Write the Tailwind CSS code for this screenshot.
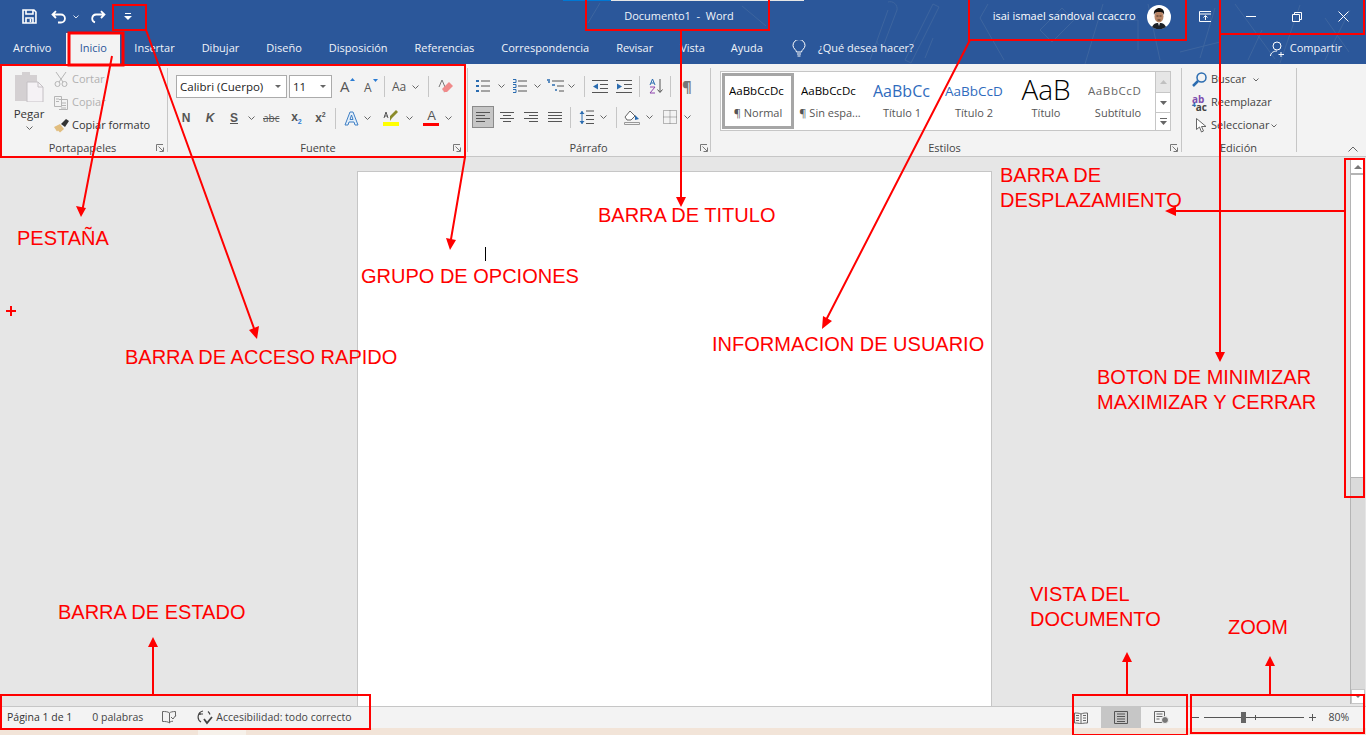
<!doctype html>
<html lang="es">
  <head>
    <meta charset="UTF-8">
    <title>Documento1 - Word</title>
    <script src="https://cdn.jsdelivr.net/npm/@tailwindcss/browser@4"></script>
  </head>
  <body class="overflow-hidden">
    <div class="relative w-[1366px] h-[735px] overflow-hidden flex flex-col font-['Open_Sans',sans-serif] text-[11px] text-[#444]">

      <!-- title bar + tabs -->
      <div class="relative h-[64px] shrink-0 bg-[#2b579a] text-white">
        <svg class="absolute inset-0" width="1366" height="64" fill="none" stroke="#3d659f" stroke-width="1">
          <path d="M905 60l28-56 6 3-28 56zM1004 60l-24-42 8-14M1040 30l22-22 12 12-22 22zM1085 64l18-60M1108 20h30v30M1160 60l-12-56M1215 8l-15 50M1235 4l40 55M1180 52l40-10M1262 30l-14 30M1300 5l-20 58M1350 10l-25 50M1325 18l24 34"/>
          <path d="M870 60l18-50M888 2a7 7 0 0 1 9 8l-13 34a4 4 0 0 1-7-3M925 58l8-20M600 3l-12 20M742 6l24 20"/>
        </svg>
        <div class="absolute top-0 left-[563px] w-[241px] h-[1px] bg-[#e6e6e6]"><div class="w-[48px] h-[1px] bg-[#0078d4]"></div></div>

        <div class="relative h-[33px] flex items-center pl-[22px]">
          <svg width="15" height="15" viewBox="0 0 15 15" fill="none" stroke="#fff" stroke-width="1.6"><path d="M1 1h11l2 2v11H1zM4 1v4h7V1M4 14V9h7v5"/><path d="M8.500 10v3" /></svg>
          <svg class="ml-[14px]" width="16" height="14" viewBox="0 0 16 14" fill="none" stroke="#fff" stroke-width="1.800"><path d="M5 1L1.500 4.500 5 8M2 4.500h8a4 4 0 0 1 0 8H7"/></svg>
          <svg class="ml-[6px]" width="6" height="4" viewBox="0 0 6 4" fill="none" stroke="#dfe7f3"><path d="M.5.5L3 3 5.500.5"/></svg>
          <svg class="ml-[12px]" width="15" height="14" viewBox="0 0 15 14" fill="none" stroke="#fff" stroke-width="1.800"><path d="M10 1l3.500 3.500L10 8M13 4.500H5a4 4 0 0 0-1 7.800"/></svg>
          <svg class="ml-[18px]" width="8" height="7" viewBox="0 0 8 7" fill="#fff"><path d="M1 0h6v1H1zM0 3h8L4 7z"/></svg>
          <div class="ml-[456px] w-[183px] text-center text-[11px] text-[#f1f4f9]">Documento1&nbsp; -&nbsp; Word</div>
          <div class="ml-[200px] w-[217px] flex items-center justify-end pr-[16px]">
            <span class="text-[11px] whitespace-nowrap mr-[11px]">isai ismael sandoval ccaccro</span>
            <svg width="24" height="24" viewBox="0 0 24 24">
              <circle cx="12" cy="12" r="12" fill="#fff"/>
              <path d="M5 22c2-4 4-4 7-4s5 0 7 4a12 12 0 0 1-14 0z" fill="#1c2026"/>
              <path d="M11 18l1 3 1-3z" fill="#eee"/>
              <ellipse cx="12" cy="11.500" rx="4.500" ry="6" fill="#b98565"/>
              <path d="M7 10c-1-5 3-7 5-7s6 1 5 7c-1-3-2-3-5-3s-4 0-5 3z" fill="#15110f"/>
              <path d="M9.500 11h2M12.500 11h2M10.500 15h3" stroke="#2b1c14" stroke-width=".8"/>
            </svg>
          </div>
          <svg class="ml-[12px]" width="13" height="11" viewBox="0 0 13 11" fill="none" stroke="#fff"><path d="M.5.500h12v10H.5zM.5 3h12M6.500 9V5M4.500 6.500l2-2 2 2"/></svg>
          <div class="ml-[17px] w-[46px] flex justify-center"><div class="w-[10px] h-[1px] bg-white"></div></div>
          <div class="w-[46px] flex justify-center"><svg width="10" height="10" viewBox="0 0 10 10" fill="none" stroke="#fff"><path d="M.5 2.500h7v7h-7zM2.500 2.500v-2h7v7h-2"/></svg></div>
          <div class="w-[46px] flex justify-center"><svg width="11" height="11" viewBox="0 0 11 11" fill="none" stroke="#fff"><path d="M.5.500l10 10M10.500.500l-10 10"/></svg></div>
        </div>

        <div class="relative h-[31px] flex items-center text-[11px] text-[#f1f4f9]">
          <div class="ml-[13px] -mt-[1px]">Archivo</div>
          <div class="ml-[15px] w-[54px] h-[31px] bg-[#f3f3f3] text-[#2b579a] flex items-center justify-center">Inicio</div>
          <div class="ml-[14px]">Insertar</div>
          <div class="ml-[27px]">Dibujar</div>
          <div class="ml-[27px]">Diseño</div>
          <div class="ml-[27px]">Disposición</div>
          <div class="ml-[27px]">Referencias</div>
          <div class="ml-[27px]">Correspondencia</div>
          <div class="ml-[27px]">Revisar</div>
          <div class="ml-[27px]">Vista</div>
          <div class="ml-[26px]">Ayuda</div>
          <svg class="ml-[29px]" width="14" height="17" viewBox="0 0 14 17" fill="none" stroke="#fff"><path d="M4.500 12c0-2-3.500-3.500-3.500-6.500a6 6 0 0 1 12 0c0 3-3.500 4.500-3.500 6.500zM5 14h4M5.500 16h3"/></svg>
          <div class="ml-[12px]">¿Qué desea hacer?</div>
          <svg class="ml-auto" width="16" height="16" viewBox="0 0 16 16" fill="none" stroke="#fff"><circle cx="7" cy="5" r="4"/><path d="M.5 15c0-3 3-5 6.500-5M11 11v5M8.500 13.500h5.500"/></svg>
          <div class="ml-[4px] mr-[24px]">Compartir</div>
        </div>
      </div>

      <!-- ribbon -->
      <div class="h-[93px] shrink-0 bg-[#f3f3f3] border-b border-[#c6c6c6] flex pt-[4px] relative">

        <!-- portapapeles -->
        <div class="relative w-[168px] h-[88px] flex flex-col">
          <div class="absolute right-0 top-0 w-[1px] h-[84px] bg-[#c6c6c6]"></div>
          <div class="flex h-[72px]">
            <div class="w-[54px] flex flex-col items-center pl-[4px]">
              <svg class="mt-[4px]" width="29" height="30" viewBox="0 0 29 30"><path d="M0 3h7V0h8v3h7v26H0z" fill="#d4d0d2"/><path d="M12 10h11l5 5v15H12z" fill="#f5f2f5" stroke="#c4c0c4"/><path d="M23 10v5h5" fill="none" stroke="#c4c0c4"/></svg>
              <div class="mt-[4px] text-[11.500px] text-[#333] leading-[16px]">Pegar</div>
              <svg class="mt-[4px]" width="7" height="4" viewBox="0 0 7 4" fill="none" stroke="#666"><path d="M.5.500l3 3 3-3"/></svg>
            </div>
            <div class="flex flex-col">
              <div class="h-[23px] flex items-center text-[#b1b1b1]">
                <svg width="14" height="15" viewBox="0 0 14 15" fill="none" stroke="#b5b5b5"><path d="M2 0l7 10M12 0L5 10"/><circle cx="3.500" cy="12" r="2.500"/><circle cx="10.500" cy="12" r="2.500"/></svg>
                <span class="ml-[4px]">Cortar</span>
              </div>
              <div class="h-[23px] flex items-center text-[#b1b1b1]">
                <svg width="14" height="14" viewBox="0 0 14 14" fill="none" stroke="#b5b5b5"><path d="M.5.500h7v10h-7zM5 3.500h8.500v10H5M2 3h3M2 5.500h3M7 7h5M7 9.500h5M7 12h5"/></svg>
                <span class="ml-[4px]">Copiar</span>
              </div>
              <div class="h-[23px] flex items-center text-[#333] whitespace-nowrap">
                <svg width="15" height="14" viewBox="0 0 15 14"><path d="M0 8l6-3 4 5-4 3.500-2-2-1 1z" fill="#e1bd7f"/><path d="M7 5l5-5 3 2-4 6z" fill="#333"/></svg>
                <span class="ml-[3px]">Copiar formato</span>
              </div>
            </div>
          </div>
          <div class="relative h-[16px] leading-[16px] text-center text-[#444] pr-[3px]">Portapapeles
            <svg class="absolute right-[4px] top-[4px]" width="8" height="8" viewBox="0 0 8 8" fill="none" stroke="#777"><path d="M.5 7V.5H7M2.500 2.500l4.500 4.500M7.500 3.500v4h-4"/></svg>
          </div>
        </div>

        <!-- fuente -->
        <div class="relative w-[300px] h-[88px] flex flex-col">
          <div class="absolute right-0 top-0 w-[1px] h-[84px] bg-[#c6c6c6]"></div>
          <div class="h-[72px] pl-[8px] text-[#444]">
            <div class="mt-[7px] h-[23px] flex items-center">
              <div class="w-[111px] h-[23px] bg-white border border-[#ababab] flex items-center pl-[3px] text-[#222] text-[11.500px]">Calibri (Cuerpo)
                <svg class="ml-auto mr-[5px]" width="6" height="3" viewBox="0 0 6 3" fill="#666"><path d="M0 0h6L3 3z"/></svg>
              </div>
              <div class="ml-[2px] w-[43px] h-[23px] bg-white border border-[#ababab] flex items-center pl-[3px] text-[#222] text-[11.500px]">11
                <svg class="ml-auto mr-[5px]" width="6" height="3" viewBox="0 0 6 3" fill="#666"><path d="M0 0h6L3 3z"/></svg>
              </div>
              <div class="relative ml-[8px] w-[13px] text-[15px] leading-none text-[#555]">A<svg class="absolute -right-[2px] -top-[1px]" width="5" height="3" viewBox="0 0 5 3" fill="#2b7cd3"><path d="M0 3l2.500-3L5 3z"/></svg></div>
              <div class="relative ml-[11px] w-[13px] text-[12px] leading-none text-[#555] pt-[2px]">A<svg class="absolute -right-[1px] -top-[1px]" width="5" height="3" viewBox="0 0 5 3" fill="#2b7cd3"><path d="M0 0l2.500 3L5 0z"/></svg></div>
              <div class="ml-[7px] w-[1px] h-[21px] bg-[#c6c6c6]"></div>
              <div class="ml-[7px] text-[12px] text-[#555]">Aa</div>
              <svg class="ml-[6px]" width="7" height="4" viewBox="0 0 7 4" fill="none" stroke="#666"><path d="M.5.500l3 3 3-3"/></svg>
              <div class="ml-[9px] w-[1px] h-[21px] bg-[#c6c6c6]"></div>
              <svg class="ml-[8px]" width="16" height="15" viewBox="0 0 16 15"><path d="M2 8l3-7 3 7" fill="none" stroke="#777"/><path d="M5 10l7-7 4 4-6 6-3 0z" fill="#f08a8a"/><path d="M5 10l3 4h-1z" fill="#d9d9d9"/></svg>
            </div>
            <div class="mt-[9px] h-[22px] flex items-center text-[#555] text-[12px] font-bold">
              <div class="w-[22px] ml-[-1px] text-center font-['Liberation_Sans',sans-serif]">N</div>
              <div class="w-[24px] ml-[1px] text-center italic font-['Liberation_Sans',sans-serif]">K</div>
              <div class="w-[24px] text-center underline font-['Liberation_Sans',sans-serif]">S</div>
              <svg class="ml-[2px]" width="7" height="4" viewBox="0 0 7 4" fill="none" stroke="#666"><path d="M.5.500l3 3 3-3"/></svg>
              <div class="ml-[8px] text-[10px] line-through font-normal">abc</div>
              <div class="ml-[7px] w-[20px] text-center font-['Liberation_Sans',sans-serif]">x<span class="text-[7px] text-[#2b7cd3] align-sub">2</span></div>
              <div class="ml-[4px] w-[20px] text-center font-['Liberation_Sans',sans-serif]">x<span class="text-[7px] align-super">2</span></div>
              <div class="ml-[5px] w-[1px] h-[21px] bg-[#c6c6c6]"></div>
              <svg class="ml-[8px]" width="15" height="15" viewBox="0 0 15 15"><path d="M1 14L6 1h3l5 13h-3l-1-3H5l-1 3zM6 8.500h3L7.500 4z" fill="#e3effa" stroke="#3f7fc4"/></svg>
              <svg class="ml-[5px]" width="7" height="4" viewBox="0 0 7 4" fill="none" stroke="#666"><path d="M.5.500l3 3 3-3"/></svg>
              <div class="ml-[12px] flex flex-col items-center w-[16px]">
                <svg width="16" height="12" viewBox="0 0 16 12" fill="none"><path d="M1 8l2-6 2 6M1.500 6h3" stroke="#555"/><path d="M7 11l2-3 6-6-2-2-6 6z" fill="#8a8a2a"/></svg>
                <div class="w-[16px] h-[4px] bg-[#ffff00]"></div>
              </div>
              <svg class="ml-[7px]" width="7" height="4" viewBox="0 0 7 4" fill="none" stroke="#666"><path d="M.5.500l3 3 3-3"/></svg>
              <div class="ml-[10px] flex flex-col items-center w-[16px]">
                <div class="text-[13px] leading-[12px] font-normal text-[#555] font-['Liberation_Sans',sans-serif]">A</div>
                <div class="w-[16px] h-[3px] mt-[1px] bg-[#ff0000]"></div>
              </div>
              <svg class="ml-[6px]" width="7" height="4" viewBox="0 0 7 4" fill="none" stroke="#666"><path d="M.5.500l3 3 3-3"/></svg>
            </div>
          </div>
          <div class="relative h-[16px] leading-[16px] text-center">Fuente
            <svg class="absolute right-[7px] top-[4px]" width="8" height="8" viewBox="0 0 8 8" fill="none" stroke="#777"><path d="M.5 7V.5H7M2.500 2.500l4.500 4.500M7.500 3.500v4h-4"/></svg>
          </div>
        </div>

        <!-- parrafo -->
        <div class="relative w-[243px] h-[88px] flex flex-col">
          <div class="absolute right-0 top-0 w-[1px] h-[84px] bg-[#c6c6c6]"></div>
          <div class="h-[72px] pl-[4px]">
            <div class="mt-[7px] h-[22px] flex items-center">
              <svg class="ml-[4px]" width="14" height="14" viewBox="0 0 14 14"><path d="M0 1h3v2H0zM0 6h3v2H0zM0 11h3v2H0z" fill="#2b6cb0"/><path d="M5 2h9M5 7h9M5 12h9" stroke="#555"/></svg>
              <svg class="ml-[8px]" width="7" height="4" viewBox="0 0 7 4" fill="none" stroke="#666"><path d="M.5.500l3 3 3-3"/></svg>
              <svg class="ml-[7px]" width="15" height="14" viewBox="0 0 15 14"><path d="M1 .500h3v3H1M1 5.500h3v3H1M1 10.500h3v3H1" fill="none" stroke="#2b6cb0"/><path d="M6 2h9M6 7h9M6 12h9" stroke="#555"/></svg>
              <svg class="ml-[7px]" width="7" height="4" viewBox="0 0 7 4" fill="none" stroke="#666"><path d="M.5.500l3 3 3-3"/></svg>
              <svg class="ml-[6px]" width="17" height="14" viewBox="0 0 17 14"><path d="M0 1h3M5 6h3M8 11h2M1 3h2" stroke="#2b6cb0" stroke-width="1.500"/><path d="M5 2h12M10 7h7M12 12h5" stroke="#555"/></svg>
              <svg class="ml-[4px]" width="7" height="4" viewBox="0 0 7 4" fill="none" stroke="#666"><path d="M.5.500l3 3 3-3"/></svg>
              <div class="ml-[9px] w-[1px] h-[21px] bg-[#c6c6c6]"></div>
              <svg class="ml-[7px]" width="16" height="13" viewBox="0 0 16 13"><path d="M0 .500h16M8 4.500h8M8 8.500h8M0 12.500h16" stroke="#555"/><path d="M6 3.500v6L1 6.500z" fill="#2b6cb0"/></svg>
              <svg class="ml-[8px]" width="16" height="13" viewBox="0 0 16 13"><path d="M0 .500h16M8 4.500h8M8 8.500h8M0 12.500h16" stroke="#555"/><path d="M1 3.500v6l5-3z" fill="#2b6cb0"/></svg>
              <div class="ml-[7px] w-[1px] h-[21px] bg-[#c6c6c6]"></div>
              <svg class="ml-[9px]" width="15" height="16" viewBox="0 0 15 16" fill="none"><path d="M1 7l2.500-6L6 7M2 5h3" stroke="#2b6cb0"/><path d="M1 9h5L1 15h5" stroke="#8e44ad"/><path d="M11 1v13M8.500 11.500l2.500 3 2.500-3" stroke="#555"/></svg>
              <div class="ml-[6px] w-[1px] h-[21px] bg-[#c6c6c6]"></div>
              <div class="ml-[11px] text-[15px] font-bold text-[#777] leading-none">¶</div>
            </div>
            <div class="mt-[9px] h-[22px] flex items-center">
              <div class="w-[22px] h-[22px] bg-[#c6c6c6] border border-[#8a8a8a] flex items-center justify-center"><svg width="14" height="11" viewBox="0 0 14 11" stroke="#555"><path d="M0 .500h14M0 3.500h9M0 6.500h14M0 9.500h9"/></svg></div>
              <svg class="ml-[6px]" width="14" height="11" viewBox="0 0 14 11" stroke="#555"><path d="M0 .500h14M3 3.500h8M0 6.500h14M3 9.500h8"/></svg>
              <svg class="ml-[10px]" width="14" height="11" viewBox="0 0 14 11" stroke="#555"><path d="M0 .500h14M5 3.500h9M0 6.500h14M5 9.500h9"/></svg>
              <svg class="ml-[10px]" width="14" height="11" viewBox="0 0 14 11" stroke="#555"><path d="M0 .500h14M0 3.500h14M0 6.500h14M0 9.500h14"/></svg>
              <div class="ml-[8px] w-[1px] h-[21px] bg-[#c6c6c6]"></div>
              <svg class="ml-[8px]" width="15" height="15" viewBox="0 0 15 15"><path d="M7 1h8M7 5.500h8M7 9.500h8M7 13.500h8" stroke="#555"/><path d="M3 1v13" stroke="#2b6cb0"/><path d="M.500 4L3 1l2.500 3zM.500 11L3 14l2.500-3z" fill="#2b6cb0"/></svg>
              <svg class="ml-[6px]" width="7" height="4" viewBox="0 0 7 4" fill="none" stroke="#666"><path d="M.5.500l3 3 3-3"/></svg>
              <div class="ml-[9px] w-[1px] h-[21px] bg-[#c6c6c6]"></div>
              <svg class="ml-[7px]" width="16" height="16" viewBox="0 0 16 16"><path d="M1 8l5-6 5 5-4 4H3z" fill="#fff" stroke="#666"/><path d="M11 6l4 4-4 1z" fill="#2b6cb0"/><path d="M.5 13.500h15v2H.5z" fill="#f3f3f3" stroke="#999"/></svg>
              <svg class="ml-[6px]" width="7" height="4" viewBox="0 0 7 4" fill="none" stroke="#666"><path d="M.5.500l3 3 3-3"/></svg>
              <svg class="ml-[10px]" width="14" height="14" viewBox="0 0 14 14" fill="none" stroke="#777" stroke-dasharray="1 1"><path d="M.5.500h13v13H.5zM7 .5v13M.5 7h13"/></svg>
              <svg class="ml-[7px]" width="7" height="4" viewBox="0 0 7 4" fill="none" stroke="#666"><path d="M.5.500l3 3 3-3"/></svg>
            </div>
          </div>
          <div class="relative h-[16px] leading-[16px] text-center pr-[2px]">Párrafo
            <svg class="absolute right-[3px] top-[4px]" width="8" height="8" viewBox="0 0 8 8" fill="none" stroke="#777"><path d="M.5 7V.5H7M2.500 2.500l4.500 4.500M7.500 3.500v4h-4"/></svg>
          </div>
        </div>

        <!-- estilos -->
        <div class="relative w-[471px] h-[88px] flex flex-col">
          <div class="absolute right-0 top-0 w-[1px] h-[84px] bg-[#c6c6c6]"></div>
          <div class="h-[72px] pl-[9px] pt-[3px]">
            <div class="w-[451px] h-[60px] bg-white border border-[#c6c6c6] flex pl-[1px] pt-[1px]">
              <div class="w-[72px] h-[56px] border-[3px] border-[#a6a6a6] flex flex-col items-center">
                <div class="w-[58px] h-[30px] overflow-hidden whitespace-nowrap text-[11.500px] leading-[30px] text-black">AaBbCcDc</div>
                <div class="text-[#555] leading-[14px]">¶ Normal</div>
              </div>
              <div class="w-[72px] h-[56px] p-[3px] flex flex-col items-center">
                <div class="w-[58px] h-[30px] overflow-hidden whitespace-nowrap text-[11.500px] leading-[30px] text-black">AaBbCcDc</div>
                <div class="text-[#555] leading-[14px] whitespace-nowrap">¶ Sin espa...</div>
              </div>
              <div class="w-[72px] h-[56px] p-[3px] flex flex-col items-center">
                <div class="w-[58px] h-[30px] overflow-hidden whitespace-nowrap text-[16px] leading-[30px] text-[#2f6bbd]">AaBbCc</div>
                <div class="text-[#555] leading-[14px]">Título 1</div>
              </div>
              <div class="w-[72px] h-[56px] p-[3px] flex flex-col items-center">
                <div class="w-[58px] h-[30px] overflow-hidden whitespace-nowrap text-[13.500px] leading-[30px] text-[#2f6bbd]">AaBbCcD</div>
                <div class="text-[#555] leading-[14px]">Título 2</div>
              </div>
              <div class="w-[72px] h-[56px] p-[3px] flex flex-col items-center">
                <div class="w-[58px] h-[30px] overflow-hidden whitespace-nowrap text-[28px] leading-[26px] text-black text-center font-light">AaB</div>
                <div class="text-[#555] leading-[14px]">Título</div>
              </div>
              <div class="w-[72px] h-[56px] p-[3px] flex flex-col items-center">
                <div class="w-[60px] h-[30px] overflow-hidden whitespace-nowrap text-[11.500px] tracking-[.6px] leading-[30px] text-[#666]">AaBbCcD</div>
                <div class="text-[#555] leading-[14px]">Subtítulo</div>
              </div>
              <div class="ml-auto -mt-[1px] w-[15px] h-[58px] border-l border-[#c6c6c6] flex flex-col">
                <div class="h-[21px] bg-[#e6e6e6] border-b border-[#c6c6c6] flex items-center justify-center"><svg width="7" height="4" viewBox="0 0 7 4" fill="#c0c0c0"><path d="M0 4l3.500-4L7 4z"/></svg></div>
                <div class="h-[20px] border-b border-[#c6c6c6] flex items-center justify-center"><svg width="7" height="4" viewBox="0 0 7 4" fill="#666"><path d="M0 0l3.500 4L7 0z"/></svg></div>
                <div class="flex-1 flex items-center justify-center"><svg width="7" height="7" viewBox="0 0 7 7" fill="#666"><path d="M0 0h7v1H0zM0 3l3.500 4L7 3z"/></svg></div>
              </div>
            </div>
          </div>
          <div class="relative h-[16px] leading-[16px] text-center pr-[4px]">Estilos
            <svg class="absolute right-[4px] top-[4px]" width="8" height="8" viewBox="0 0 8 8" fill="none" stroke="#777"><path d="M.5 7V.5H7M2.500 2.500l4.500 4.500M7.500 3.500v4h-4"/></svg>
          </div>
        </div>

        <!-- edicion -->
        <div class="relative w-[115px] h-[88px] flex flex-col">
          <div class="absolute right-0 top-0 w-[1px] h-[84px] bg-[#c6c6c6]"></div>
          <div class="h-[72px] pl-[10px] text-[#444]">
            <div class="h-[23px] flex items-center">
              <svg width="15" height="15" viewBox="0 0 15 15" fill="none" stroke="#2b6cb0"><circle cx="9.500" cy="5.500" r="4.500" stroke-width="1.500"/><path d="M6 9l-5 5" stroke-width="2.500"/></svg>
              <span class="ml-[4px]">Buscar</span>
              <svg class="ml-[7px]" width="6" height="4" viewBox="0 0 6 4" fill="none" stroke="#666"><path d="M.5.500L3 3 5.500.5"/></svg>
            </div>
            <div class="h-[23px] flex items-center">
              <div class="w-[16px] text-[10px] leading-[8px] font-bold text-[#444]"><span class="text-[#7c4dae]">ab</span><br><span class="text-[#2b6cb0]">⁴</span>ac</div>
              <span class="ml-[3px]">Reemplazar</span>
            </div>
            <div class="h-[23px] flex items-center">
              <svg class="ml-[4px]" width="11" height="15" viewBox="0 0 11 15" fill="#fff" stroke="#666"><path d="M.5.500v11l3-2.500 2 5 2-1-2-4.500h4.500z"/></svg>
              <span class="ml-[4px]">Seleccionar</span>
              <svg class="ml-[2px]" width="6" height="4" viewBox="0 0 6 4" fill="none" stroke="#666"><path d="M.5.500L3 3 5.500.5"/></svg>
            </div>
          </div>
          <div class="h-[16px] leading-[16px] text-center pr-[2px]">Edición</div>
        </div>

        <svg class="ml-auto mr-[8px] mt-[78px]" width="10" height="6" viewBox="0 0 10 6" fill="none" stroke="#666"><path d="M.5 5.500L5 1l4.500 4.500"/></svg>
      </div>

      <!-- document area -->
      <div class="relative flex-1 bg-[#e6e6e6] flex">
        <div class="relative ml-[357px] mt-[14px] w-[635px] bg-white border-x border-t border-[#c6c6c6]">
          <div class="absolute left-[127px] top-[75px] w-[1px] h-[14px] bg-black"></div>
        </div>
        <div class="ml-auto mr-[1px] mt-[3px] mb-[2px] w-[15px] bg-[#dadada] flex flex-col border-l border-[#b4b4b4]">
          <div class="h-[15px] bg-white border-b-2 border-[#b4b4b4] flex items-center justify-center"><svg width="8" height="4" viewBox="0 0 8 4" fill="#777"><path d="M0 4l4-4 4 4z"/></svg></div>
          <div class="h-[303px] bg-white border-b border-[#b4b4b4]"></div>
          <div class="mt-auto h-[15px] bg-white border border-[#c6c6c6] flex items-center justify-center"><svg width="6" height="3" viewBox="0 0 6 3" fill="#777"><path d="M0 0l3 3 3-3z"/></svg></div>
        </div>
      </div>

      <!-- status bar -->
      <div class="h-[22px] shrink-0 bg-[#f3f3f3] border-t border-[#c6c6c6] flex items-center text-[#444] text-[10.500px]">
        <span class="ml-[7px] text-[#333]">Página 1 de 1</span>
        <span class="ml-[20px]">0 palabras</span>
        <svg class="ml-[19px]" width="15" height="13" viewBox="0 0 15 13" fill="none" stroke="#666"><path d="M7.500 2C6 .5 3 .5.500.500v10c3 0 5.500 0 7 1.500V2c1-1 3-1.500 6-1.500v5M8 11c1-.5 2-.8 3-.8M9 6l2 2 3-4"/></svg>
        <svg class="ml-[20px]" width="17" height="15" viewBox="0 0 17 15" fill="none" stroke="#444" stroke-width="1.200"><path d="M6 1a6 6 0 0 0-2 11M11 1.500a6 6 0 0 1 2 3M3 2v3M6 4h-4"/><path d="M7 9l3 4 5-6" stroke-width="1.800"/></svg>
        <span class="ml-[2px]">Accesibilidad: todo correcto</span>

        <svg class="ml-[722px]" width="14" height="12" viewBox="0 0 14 12" fill="none" stroke="#666"><path d="M7 2C5 1 3 1 .5 1v10c2.500 0 4.500 0 6.500 1 2-1 4-1 6.500-1V1C11 1 9 1 7 2v10M2 3.500h3M2 6h3M2 8.500h3M9 3.500h3M9 6h3M9 8.500h3"/></svg>
        <div class="ml-[13px] w-[40px] h-[21px] bg-[#c6c6c6] flex items-center justify-center"><svg width="14" height="13" viewBox="0 0 14 13" fill="none" stroke="#555"><path d="M.5.500h13v12H.5zM3 3h8M3 5.500h8M3 8h8M3 10.500h8"/></svg></div>
        <svg class="ml-[13px]" width="15" height="13" viewBox="0 0 15 13" fill="none" stroke="#666"><path d="M.5.500h10v11H.5zM2.500 3h6M2.500 5.500h6M2.500 8h3"/><circle cx="11" cy="9" r="3.500" fill="#777" stroke="#f3f3f3"/></svg>
        <div class="ml-[23px] w-[7px] h-[1px] bg-[#555]"></div>
        <div class="relative ml-[5px] w-[100px] h-[1px] bg-[#555]">
          <div class="absolute left-[37px] -top-[5px] w-[5px] h-[11px] bg-[#666]"></div>
          <div class="absolute left-[51px] -top-[2px] w-[1px] h-[5px] bg-[#555]"></div>
        </div>
        <svg class="ml-[5px]" width="7" height="7" viewBox="0 0 7 7" stroke="#555"><path d="M0 3.500h7M3.500 0v7"/></svg>
        <span class="ml-[13px] text-[#444]">80%</span>
      </div>

      <!-- desktop behind the window -->
      <div class="relative h-[7px] shrink-0 bg-[#f2e4d8]">
        <div class="ml-[198px] w-[48px] h-[7px] bg-[#f6f1ea]"></div>
      </div>

      <!-- red annotations over the screenshot -->
      <svg class="absolute inset-0 pointer-events-none" width="1366" height="735" fill="none" stroke="#ff0000" stroke-width="2">
        <rect x="113" y="5" width="33" height="25"/>
        <rect x="69" y="33" width="54" height="32" stroke-width="3"/>
        <rect x="1" y="65" width="464" height="92"/>
        <rect x="586" y="-2" width="183" height="32"/>
        <rect x="969" y="-2" width="217" height="42"/>
        <rect x="1220" y="-2" width="144" height="36"/>
        <rect x="1345" y="159" width="19" height="338"/>
        <rect x="1" y="695" width="369" height="34"/>
        <rect x="1073" y="695" width="114" height="40"/>
        <rect x="1191" y="695" width="173" height="38"/>
        <path d="M112 56L82 212M146 30l110 304M465 157l-15 88M681 30v172M970 40L824 324M1220 34v324M1345 211H1170M153 695V642M1127 695V657M1270 695V661"/>
        <g fill="#ff0000" stroke="none">
          <path d="M81 217l-5-11 10 2zM257 339l-8-9 10-4zM450 250l-4-12 10 2zM681 207l-5-10h10zM822 329l1-13 9 5zM1220 362l-5-10h10zM1165 211l11-5v10zM153 637l-5 10h10zM1127 652l-5 10h10zM1270 656l-5 10h10z"/>
        </g>
      </svg>
      <div class="absolute left-[6px] top-[305px] w-[10px] h-[2px] bg-[#ff0000] my-[5px]"></div>
      <div class="absolute left-[10px] top-[306px] w-[2px] h-[10px] bg-[#ff0000]"></div>
      <div class="font-['Liberation_Sans',sans-serif] text-[20px] leading-[25px] text-[#ff0000]">
        <span class="absolute left-[17px] top-[226px]">PESTAÑA</span>
        <span class="absolute left-[125px] top-[345px]">BARRA DE ACCESO RAPIDO</span>
        <span class="absolute left-[361px] top-[264px]">GRUPO DE OPCIONES</span>
        <span class="absolute left-[598px] top-[203px]">BARRA DE TITULO</span>
        <span class="absolute left-[712px] top-[332px]">INFORMACION DE USUARIO</span>
        <span class="absolute left-[1000px] top-[163px]">BARRA DE<br>DESPLAZAMIENTO</span>
        <span class="absolute left-[1097px] top-[365px]">BOTON DE MINIMIZAR<br>MAXIMIZAR Y CERRAR</span>
        <span class="absolute left-[1030px] top-[582px]">VISTA DEL<br>DOCUMENTO</span>
        <span class="absolute left-[1228px] top-[615px]">ZOOM</span>
        <span class="absolute left-[58px] top-[600px]">BARRA DE ESTADO</span>
      </div>
    </div>
  </body>
</html>
